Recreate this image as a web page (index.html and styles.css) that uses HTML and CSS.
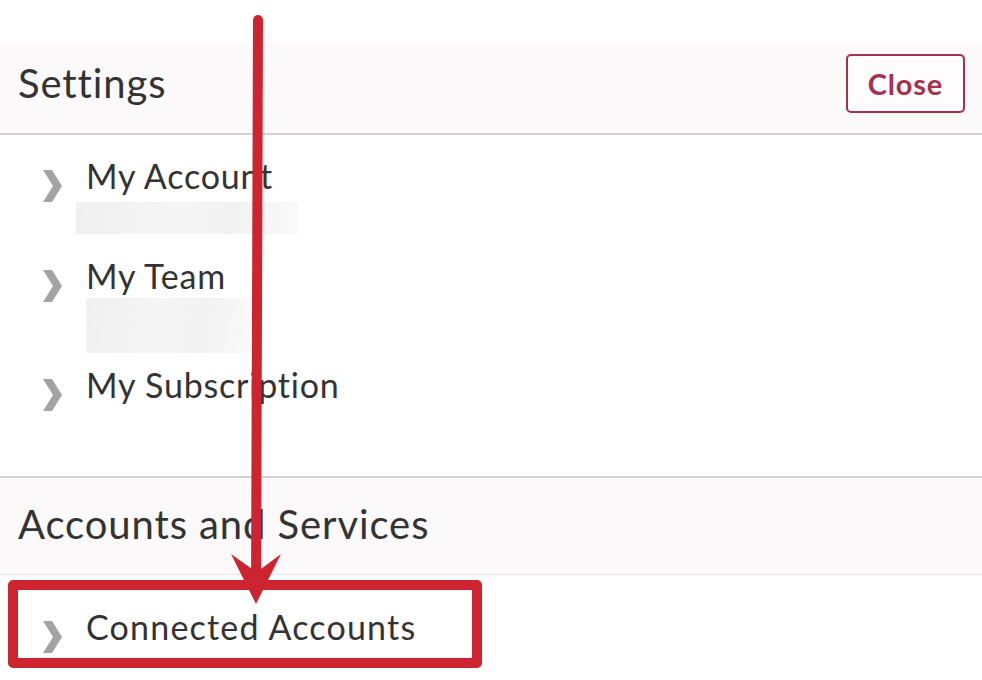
FILE: index.html
```html
<!DOCTYPE html>
<html lang="en">
<head>
<meta charset="utf-8">
<title>Settings</title>
<link rel="stylesheet" href="styles.css">
</head>
<body>
<div class="page">
  <div class="top-space"></div>
  <header class="panel-head">
    <h1 class="panel-title">Settings</h1>
    <button class="close-btn" type="button">Close</button>
  </header>
  <section class="list list-main">
    <div class="item item-account">
      <span class="chev"><svg viewBox="0 0 19 32" width="19" height="32"><polygon points="0,0 9,0 19,16 9,32 0,32 10,16"/></svg></span>
      <div class="item-body">
        <div class="item-title">My Account</div>
        <div class="blur blur-account"></div>
      </div>
    </div>
    <div class="item item-team">
      <span class="chev"><svg viewBox="0 0 19 32" width="19" height="32"><polygon points="0,0 9,0 19,16 9,32 0,32 10,16"/></svg></span>
      <div class="item-body">
        <div class="item-title">My Team</div>
        <div class="blur blur-team"></div>
      </div>
    </div>
    <div class="item item-sub">
      <span class="chev"><svg viewBox="0 0 19 32" width="19" height="32"><polygon points="0,0 9,0 19,16 9,32 0,32 10,16"/></svg></span>
      <div class="item-body">
        <div class="item-title">My Subscription</div>
      </div>
    </div>
  </section>
  <header class="section-head">
    <h2 class="section-title">Accounts and Services</h2>
  </header>
  <section class="list list-services">
    <div class="item item-connected">
      <span class="chev"><svg viewBox="0 0 19 32" width="19" height="32"><polygon points="0,0 9,0 19,16 9,32 0,32 10,16"/></svg></span>
      <div class="item-body">
        <div class="item-title item-title-wide">Connected Accounts</div>
      </div>
    </div>
  </section>

  <div class="highlight-box"></div>
  <svg class="annot-arrow" viewBox="0 0 982 680" width="982" height="680">
    <line x1="258" y1="20" x2="256" y2="592" stroke="#cd2430" stroke-width="10" stroke-linecap="round"/>
    <polygon points="231,554 252,569 261,569 281,554 256,604" fill="#cd2430"/>
  </svg>
</div>
</body>
</html>
```

FILE: styles.css
```css
html, body {
  margin: 0;
  padding: 0;
  background: #ffffff;
}
body {
  font-family: Lato, "Open Sans", "Liberation Sans", sans-serif;
  color: #333333;
}
.page {
  position: relative;
  width: 982px;
  height: 680px;
  overflow: hidden;
}
.top-space {
  height: 42px;
}
.panel-head {
  height: 93px;
  box-sizing: border-box;
  background: #fbf9fa;
  border-bottom: 2px solid #d2d2d2;
  display: flex;
  align-items: center;
  justify-content: space-between;
  padding: 0 17px 10px 18px;
}
.panel-title, .section-title {
  margin: 0;
  font-weight: 400;
  font-size: 40px;
  line-height: 48px;
  letter-spacing: 0.9px;
  color: #333333;
}
.close-btn {
  width: 119px;
  height: 59px;
  box-sizing: border-box;
  border: 2px solid #a6304f;
  border-radius: 5px;
  background: #fefcfd;
  color: #a6304f;
  font-family: Lato, "Open Sans", "Liberation Sans", sans-serif;
  font-weight: 700;
  font-size: 29px;
  letter-spacing: 0.8px;
  padding: 0;
  margin-top: 2px;
}
.list-main {
  padding: 21px 0 0 43px;
  height: 343px;
  box-sizing: border-box;
  border-bottom: 2px solid #d2d2d2;
}
.item {
  display: grid;
  grid-template-columns: 19px 1fr;
  column-gap: 24px;
}
.chev {
  display: block;
  margin-top: 14px;
  height: 32px;
}
.chev svg {
  display: block;
  fill: #a3a3a3;
}
.item-title {
  font-size: 34px;
  line-height: 40px;
  letter-spacing: 0.8px;
  color: #333333;
}
.item-title-wide {
  letter-spacing: 1.2px;
}
.blur {
  background: linear-gradient(100deg, #f0f0f0 0%, #f5f5f5 45%, #f2f2f2 70%, #fafafa 100%);
}
.blur-account {
  margin: 6px 0 0 -10px;
  width: 222px;
  height: 32px;
}
.blur-team {
  margin: 2px 0 0 0;
  width: 165px;
  height: 55px;
}
.item-account {
  margin-bottom: 22px;
}
.item-team {
  margin-bottom: 12px;
}
.section-head {
  height: 97px;
  box-sizing: border-box;
  background: #fbf9fa;
  border-bottom: 1px solid #e6e6e6;
  display: flex;
  align-items: center;
  padding: 0 17px 4px 18px;
}
.list-services {
  padding: 32px 0 0 43px;
}
.highlight-box {
  position: absolute;
  left: 8px;
  top: 580px;
  width: 474px;
  height: 88px;
  box-sizing: border-box;
  border: 10px solid #cd2430;
  border-radius: 5px;
  pointer-events: none;
}
.annot-arrow {
  position: absolute;
  left: 0;
  top: 0;
  pointer-events: none;
}
```
